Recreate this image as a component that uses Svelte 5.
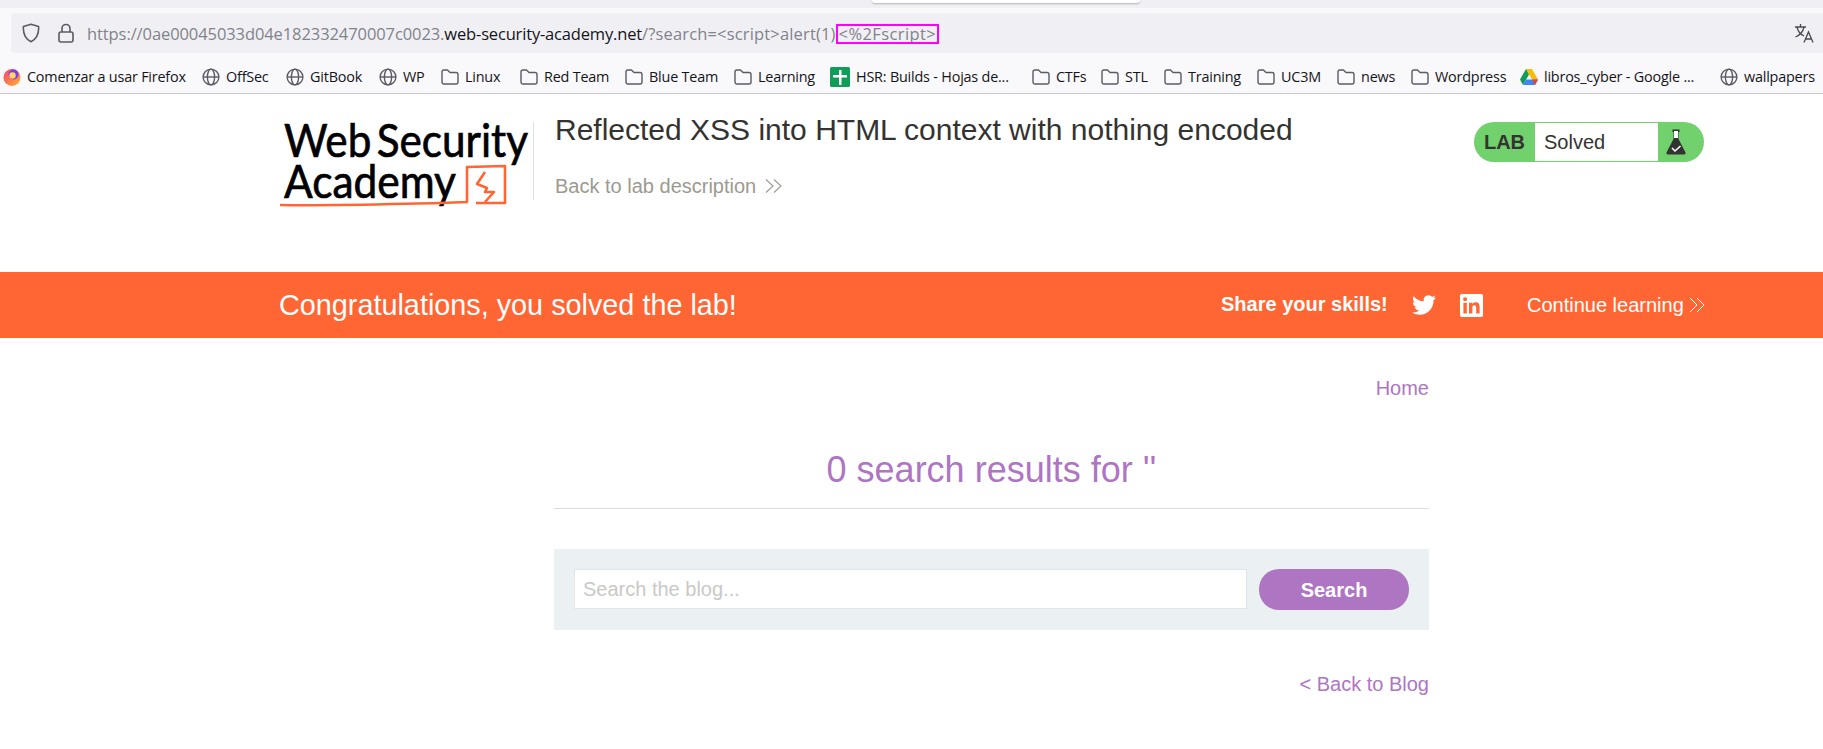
<script>
  const bookmarks = [
    { t: 'Comenzar a usar Firefox', i: 'fx', w: 159 },
    { t: 'OffSec', i: 'globe', w: 44 },
    { t: 'GitBook', i: 'globe', w: 53 },
    { t: 'WP', i: 'globe', w: 22 },
    { t: 'Linux', i: 'folder', w: 39 },
    { t: 'Red Team', i: 'folder', w: 65 },
    { t: 'Blue Team', i: 'folder', w: 69 },
    { t: 'Learning', i: 'folder', w: 56 },
    { t: 'HSR: Builds - Hojas de...', i: 'sheet', w: 160 },
    { t: 'CTFs', i: 'folder', w: 29 },
    { t: 'STL', i: 'folder', w: 23 },
    { t: 'Training', i: 'folder', w: 53 },
    { t: 'UC3M', i: 'folder', w: 40 },
    { t: 'news', i: 'folder', w: 34 },
    { t: 'Wordpress', i: 'folder', w: 69 },
    { t: 'libros_cyber - Google ...', i: 'drive', w: 160 },
    { t: 'wallpapers', i: 'globe', w: 72 }
  ];
</script>

<div class="page">
  <div class="tabstrip"><div class="popup"></div></div>
  <div class="toolbar">
    <div class="urlbar">
      <svg class="shield" viewBox="0 0 18 20" width="18" height="20"><path d="M9 1.200 L16.600 3.600 C17 10 15.200 15.600 9 18.800 C2.800 15.600 1 10 1.400 3.600 Z" fill="none" stroke="#5b5b66" stroke-width="1.600" stroke-linejoin="round"/></svg>
      <svg class="lock" viewBox="0 0 16 20" width="16" height="20"><path d="M4 9V5.500a4 4 0 0 1 8 0V9" fill="none" stroke="#5b5b66" stroke-width="1.600"/><rect x="1" y="9" width="14" height="10" rx="2" fill="none" stroke="#5b5b66" stroke-width="1.600"/></svg>
      <span class="url"><span class="origin">https://0ae00045033d04e182332470007c0023.</span><span class="domain">web-security-academy.net</span><span class="query">/?search=&lt;script&gt;alert(1)</span><span class="mark">&lt;%2Fscript&gt;</span></span>
      <svg class="translate" viewBox="0 0 20 20" width="20" height="20"><g fill="none" stroke="#4a4a55" stroke-width="1.300"><path d="M1 4h11M6.500 1v3M3 4c.8 4 3.600 7.400 7 9M10 4c-.8 4-4 8-8.500 10"/><path d="M10 19.500l4.500-10.500 4.500 10.500M11.500 16h6"/></g></svg>
    </div>
    <div class="bookmarks">
      {#each bookmarks as b}
        <div class="bm">
          {#if b.i === 'globe'}
            <svg viewBox="0 0 18 18" width="18" height="18"><g fill="none" stroke="#5b5b66" stroke-width="1.400"><circle cx="9" cy="9" r="7.900"/><ellipse cx="9" cy="9" rx="3.600" ry="7.900"/><path d="M1.200 9h15.600"/></g></svg>
          {:else if b.i === 'folder'}
            <svg viewBox="0 0 18 18" width="18" height="18"><path d="M1 4a2 2 0 0 1 2-2h3.500l2.500 2.500h6a2 2 0 0 1 2 2V14a2 2 0 0 1-2 2H3a2 2 0 0 1-2-2Z" fill="none" stroke="#5b5b66" stroke-width="1.400" stroke-linejoin="round"/></svg>
          {:else if b.i === 'fx'}
            <svg viewBox="0 0 18 18" width="18" height="18"><defs><linearGradient id="fxg" x1="0" y1="0" x2="1" y2="1"><stop offset="0" stop-color="#ff3d6e"/><stop offset="1" stop-color="#ffb52e"/></linearGradient></defs><circle cx="9" cy="9.500" r="8.500" fill="url(#fxg)"/><circle cx="10.500" cy="6.500" r="5" fill="#7a3fe0"/><circle cx="9.500" cy="7.500" r="3.200" fill="#ffd567"/></svg>
          {:else if b.i === 'sheet'}
            <svg viewBox="0 0 20 20" width="20" height="20"><rect width="20" height="20" rx="1.500" fill="#0f9d58"/><path d="M9 3h2.500v5H17v2.500h-5.500V18H9v-7.500H3V8h6Z" fill="#fff"/></svg>
          {:else}
            <svg viewBox="0 0 18 18" width="18" height="18"><path d="M6 1h6l6 10.500h-6Z" fill="#fbbc04"/><path d="M6 1 0 11.500 3 17 9 6.500Z" fill="#0f9d58"/><path d="M3 17h12l3-5.500H6Z" fill="#4285f4"/><path d="M15 17l3-5.500h-6Z" fill="#ea4335"/></svg>
          {/if}
          <span class="bmt" style="width:{b.w}px">{b.t}</span>
        </div>
      {/each}
    </div>
  </div>

  <header class="head">
    <svg class="logo" viewBox="0 0 256 100" width="256" height="100">
      <text x="4" y="39" class="lt" textLength="244" lengthAdjust="spacingAndGlyphs">Web Security</text>
      <text x="4" y="80" class="lt" textLength="172" lengthAdjust="spacingAndGlyphs">Academy</text>
      <path d="M0 87C50 88 110 86 160 85L187 84L187 49L225 48L225 85L196 85" fill="none" stroke="#ff6633" stroke-width="2.600" stroke-linejoin="round"/>
      <path d="M205 54L197 66L207 70L205 74L214 74L205 84" fill="none" stroke="#ff6633" stroke-width="2.600" stroke-linejoin="round"/>
    </svg>
    <div class="divider"></div>
    <div class="titles">
      <h2>Reflected XSS into HTML context with nothing encoded</h2>
      <a class="back">Back to lab description <svg viewBox="0 0 18 14" width="18" height="14"><path d="M1 .5l7 6.500-7 6.500M9 .5l7 6.500-7 6.500" fill="none" stroke="#9c9a90" stroke-width="1.100"/></svg></a>
    </div>
    <div class="badge">
      <span class="lab">LAB</span>
      <span class="status">Solved</span>
      <span class="flask"><svg viewBox="0 0 20 26" width="20" height="26"><path d="M6.500 .500h7v2.500h-1v7l7 13.500a1.500 1.500 0 0 1-1.300 2H1.800a1.500 1.500 0 0 1-1.300-2l7-13.500v-7h-1Z" fill="#333332"/><rect x="8" y="2" width="4" height="7" fill="#fff"/><path d="M6 19l3 3 5.500-5" fill="none" stroke="#fff" stroke-width="1.600"/></svg></span>
    </div>
  </header>

  <div class="banner">
    <span class="congrats">Congratulations, you solved the lab!</span>
    <b class="share">Share your skills!</b>
    <svg class="tw" viewBox="0 0 24 24" width="24" height="24"><path fill="#fff" d="M23.953 4.570a10 10 0 01-2.825.775 4.958 4.958 0 002.163-2.723c-.951.555-2.005.959-3.127 1.184a4.920 4.920 0 00-8.384 4.482C7.690 8.095 4.067 6.130 1.640 3.162a4.822 4.822 0 00-.666 2.475c0 1.710.870 3.213 2.188 4.096a4.904 4.904 0 01-2.228-.616v.060a4.923 4.923 0 003.946 4.827 4.996 4.996 0 01-2.212.085 4.936 4.936 0 004.604 3.417 9.867 9.867 0 01-6.102 2.105c-.390 0-.779-.023-1.170-.067a13.995 13.995 0 007.557 2.209c9.053 0 13.998-7.496 13.998-13.985 0-.210 0-.420-.015-.630A9.935 9.935 0 0024 4.590z"/></svg>
    <svg class="li" viewBox="0 0 24 24" width="23" height="23"><path fill="#fff" d="M20.447 20.452h-3.554v-5.569c0-1.328-.027-3.037-1.852-3.037-1.853 0-2.136 1.445-2.136 2.939v5.667H9.351V9h3.414v1.561h.046c.477-.9 1.637-1.850 3.370-1.850 3.601 0 4.267 2.370 4.267 5.455v6.286zM5.337 7.433c-1.144 0-2.063-.926-2.063-2.065 0-1.138.920-2.063 2.063-2.063 1.140 0 2.064.925 2.064 2.063 0 1.139-.925 2.065-2.064 2.065zm1.782 13.019H3.555V9h3.564v11.452zM22.225 0H1.771C.792 0 0 .774 0 1.729v20.542C0 23.227.792 24 1.771 24h20.451C23.200 24 24 23.227 24 22.271V1.729C24 .774 23.200 0 22.222 0h.003z"/></svg>
    <span class="cont">Continue learning</span>
    <svg class="chev" viewBox="0 0 18 16" width="18" height="16"><path d="M1 1l7 7-7 7M8 1l7 7-7 7" fill="none" stroke="#fff" stroke-width="1"/></svg>
  </div>

  <main class="main">
    <nav class="home"><a>Home</a></nav>
    <h1>0 search results for ''</h1>
    <hr />
    <form class="search">
      <input placeholder="Search the blog..." />
      <button type="button">Search</button>
    </form>
    <div class="backblog"><a>&lt; Back to Blog</a></div>
  </main>
</div>

<style>
  :global(body) { margin: 0; background: #fff; }
  .page { width: 1823px; height: 749px; overflow: hidden; font-family: "Liberation Sans", Arial, sans-serif; }
  .tabstrip { height: 8px; background: #f0f0f4; position: relative; }
  .popup { position: absolute; left: 872px; top: 0; width: 268px; height: 3px; background: #fff; border-radius: 0 0 4px 4px; box-shadow: 0 1px 2px rgba(0,0,0,.25); }
  .toolbar { background: #f9f9fb; padding-top: 5px; border-bottom: 1px solid #c8c8cc; height: 80px; }
  .urlbar { margin-left: 11px; height: 40px; background: #f0f0f4; border-radius: 4px 0 0 4px; display: flex; align-items: center; padding-left: 11px; position: relative; }
  .shield { flex: none; }
  .lock { flex: none; margin-left: 18px; }
  .url { margin: 1px 0 0 13px; font-family: "Open Sans", sans-serif; font-size: 16.500px; color: #82828a; white-space: nowrap; display: flex; align-items: center; }
  .origin { letter-spacing: -.09px; }
  .domain { color: #15141a; letter-spacing: -.17px; }
  .query { letter-spacing: .16px; }
  .mark { outline: 2px solid #ff00ff; outline-offset: -2px; padding: 0 3px; height: 20px; line-height: 20px; display: block; letter-spacing: .4px; }
  .translate { position: absolute; right: 9px; top: 10px; }
  .bookmarks { display: flex; align-items: center; height: 40px; box-sizing: border-box; padding: 7px 0 0 3px; gap: 16px; }
  .bm { display: flex; align-items: center; gap: 6px; flex: none; }
  .bmt { font-family: "Open Sans", sans-serif; font-size: 14.400px; color: #15141a; white-space: nowrap; letter-spacing: -.2px; display: block; }
  .head { height: 178px; display: flex; align-items: flex-start; padding-left: 280px; position: relative; }
  .logo { margin-top: 24px; flex: none; overflow: visible; }
  .lt { font-family: Lato, sans-serif; font-size: 47px; fill: #000; stroke: #000; stroke-width: .7px; word-spacing: -6px; }
  .divider { width: 1px; height: 78px; background: #e0e0e0; margin-top: 28px; margin-left: -3px; flex: none; }
  .titles { margin-left: 21px; padding-top: 18px; }
  h2 { margin: 0; font-size: 30px; font-weight: 400; color: #333332; line-height: 36px; }
  .back { display: flex; align-items: center; gap: 9px; margin-top: 26px; font-size: 20px; line-height: 24px; color: #9c9a90; }
  .badge { position: absolute; left: 1474px; top: 28px; width: 230px; height: 40px; box-sizing: border-box; background: #70d16d; border-radius: 20px; display: flex; align-items: center; color: #333332; }
  .lab { width: 61px; text-align: center; font-weight: 700; font-size: 20px; }
  .status { width: 123px; height: 38px; box-sizing: border-box; background: #fff; line-height: 38px; padding-left: 9px; font-size: 20px; }
  .flask { width: 46px; display: flex; justify-content: flex-start; padding-left: 8px; box-sizing: border-box; }
  .banner { height: 66px; background: #ff6633; color: #fff; display: flex; align-items: center; padding-left: 279px; }
  .congrats { font-size: 28.800px; width: 942px; flex: none; }
  .share { font-size: 20px; width: 191px; flex: none; margin-top: -2px; }
  .tw { flex: none; }
  .li { flex: none; margin-left: 24px; }
  .cont { font-size: 20px; margin-left: 44px; flex: none; }
  .chev { flex: none; margin-left: 5px; }
  .main { width: 875px; margin-left: 554px; color: #ae75c3; }
  .home { text-align: right; font-size: 20px; line-height: 24px; padding-top: 38px; }
  h1 { margin: 48px 0 0; font-size: 36px; font-weight: 400; text-align: center; line-height: 44px; }
  hr { border: 0; height: 1px; background: #dcdcdc; margin: 16px 0 0; }
  .search { margin-top: 40px; height: 81px; box-sizing: border-box; background: #ebf0f2; display: flex; align-items: flex-start; padding: 20px 20px 0 20px; gap: 12px; }
  input { width: 673px; height: 40px; box-sizing: border-box; border: 1px solid #e1e5e8; background: #fff; font: 20px "Liberation Sans", Arial, sans-serif; padding: 0 8px; outline: none; }
  input::placeholder { color: #c9c9c6; opacity: 1; }
  button { width: 150px; height: 41px; border: 0; border-radius: 20px; background: #ae75c3; color: #fff; font: 700 20px "Liberation Sans", Arial, sans-serif; padding: 1px 6px 0; }
  .backblog { text-align: right; font-size: 20px; line-height: 24px; margin-top: 42px; }
</style>
